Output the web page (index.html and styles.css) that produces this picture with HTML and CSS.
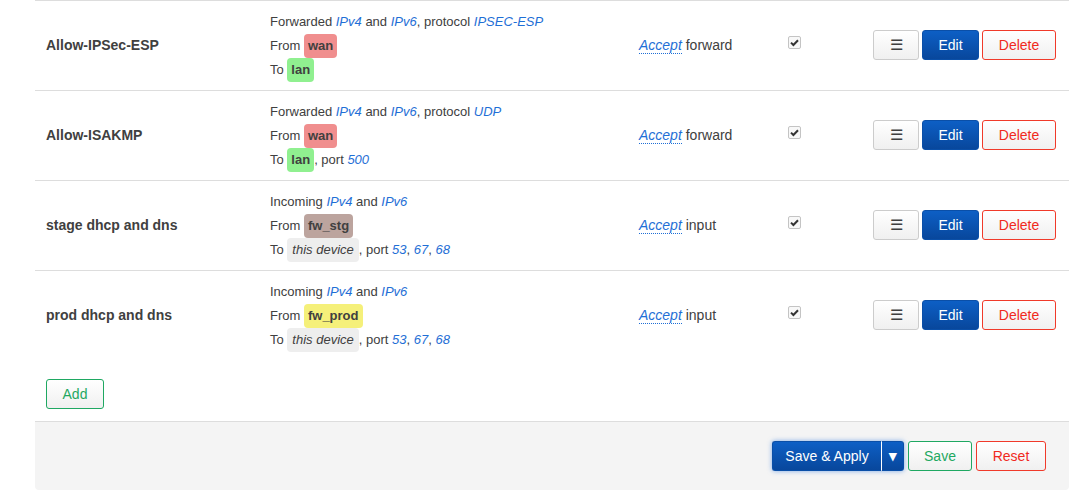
FILE: index.html
```html
<!DOCTYPE html>
<html>
<head>
<meta charset="utf-8">
<link rel="stylesheet" href="styles.css">
</head>
<body>
<div class="wrap">
  <div class="table">
    <div class="tr">
      <div class="td name">Allow-IPSec-ESP</div>
      <div class="td desc">
        <div class="line">Forwarded <em>IPv4</em> and <em>IPv6</em>, protocol <em>IPSEC-ESP</em></div>
        <div class="line">From <span class="zone z-wan">wan</span></div>
        <div class="line">To <span class="zone z-lan">lan</span></div>
      </div>
      <div class="td action"><span class="act">Accept</span> forward</div>
      <div class="td en"><span class="cb"><svg viewBox="0 0 13 13" width="13" height="13"><path d="M3 6.6 L5.4 9 L10 4.2" fill="none" stroke="#333" stroke-width="2"/></svg></span></div>
      <div class="td btns"><button class="btn menu">☰</button><button class="btn edit">Edit</button><button class="btn del">Delete</button></div>
    </div>
    <div class="tr">
      <div class="td name">Allow-ISAKMP</div>
      <div class="td desc">
        <div class="line">Forwarded <em>IPv4</em> and <em>IPv6</em>, protocol <em>UDP</em></div>
        <div class="line">From <span class="zone z-wan">wan</span></div>
        <div class="line">To <span class="zone z-lan">lan</span>, port <em>500</em></div>
      </div>
      <div class="td action"><span class="act">Accept</span> forward</div>
      <div class="td en"><span class="cb"><svg viewBox="0 0 13 13" width="13" height="13"><path d="M3 6.6 L5.4 9 L10 4.2" fill="none" stroke="#333" stroke-width="2"/></svg></span></div>
      <div class="td btns"><button class="btn menu">☰</button><button class="btn edit">Edit</button><button class="btn del">Delete</button></div>
    </div>
    <div class="tr">
      <div class="td name">stage dhcp and dns</div>
      <div class="td desc">
        <div class="line">Incoming <em>IPv4</em> and <em>IPv6</em></div>
        <div class="line">From <span class="zone z-stg">fw_stg</span></div>
        <div class="line">To <span class="zone z-dev">this device</span>, port <em>53</em>, <em>67</em>, <em>68</em></div>
      </div>
      <div class="td action"><span class="act">Accept</span> input</div>
      <div class="td en"><span class="cb"><svg viewBox="0 0 13 13" width="13" height="13"><path d="M3 6.6 L5.4 9 L10 4.2" fill="none" stroke="#333" stroke-width="2"/></svg></span></div>
      <div class="td btns"><button class="btn menu">☰</button><button class="btn edit">Edit</button><button class="btn del">Delete</button></div>
    </div>
    <div class="tr">
      <div class="td name">prod dhcp and dns</div>
      <div class="td desc">
        <div class="line">Incoming <em>IPv4</em> and <em>IPv6</em></div>
        <div class="line">From <span class="zone z-prod">fw_prod</span></div>
        <div class="line">To <span class="zone z-dev">this device</span>, port <em>53</em>, <em>67</em>, <em>68</em></div>
      </div>
      <div class="td action"><span class="act">Accept</span> input</div>
      <div class="td en"><span class="cb"><svg viewBox="0 0 13 13" width="13" height="13"><path d="M3 6.6 L5.4 9 L10 4.2" fill="none" stroke="#333" stroke-width="2"/></svg></span></div>
      <div class="td btns"><button class="btn menu">☰</button><button class="btn edit">Edit</button><button class="btn del">Delete</button></div>
    </div>
  </div>
  <div class="add-row"><button class="btn add">Add</button></div>
  <div class="footer">
    <div class="apply-group"><button class="apply-main">Save &amp; Apply</button><button class="apply-drop">▾</button></div>
    <button class="btn save">Save</button>
    <button class="btn reset">Reset</button>
  </div>
</div>
</body>
</html>
```

FILE: styles.css
```css
* { box-sizing: border-box; }
body {
  margin: 0;
  background: #fff;
  font-family: "Liberation Sans", Arial, sans-serif;
  color: #404040;
  font-size: 13px;
}
.wrap {
  margin-left: 35px;
  width: 1034px;
}
.tr {
  display: grid;
  grid-template-columns: 224px 369px 149px 80px 1fr;
  height: 90px;
  border-top: 1px solid #ddd;
  padding-bottom: 2px;
  align-items: center;
}
.td { padding: 0 11px; }
.name {
  font-weight: bold;
  font-size: 14px;
  color: #404040;
}
.desc .line {
  height: 24px;
  line-height: 24px;
  white-space: nowrap;
}
.desc { margin-top: 3px; }
em {
  color: #1f6fd6;
  font-style: italic;
}
.zone {
  display: inline-block;
  line-height: 24px;
  height: 24px;
  padding: 0 4px;
  border-radius: 4px;
  font-weight: bold;
  color: #404040;
  vertical-align: top;
}
.z-wan { background: #f08e8e; }
.z-lan { background: #90f090; }
.z-stg { background: #bca49e; }
.z-prod { background: #f5f07a; }
.z-dev {
  background: #eee;
  font-weight: normal;
  font-style: italic;
  padding: 0 5px;
}
.action { font-size: 14px; }
.act {
  color: #1f6fd6;
  font-style: italic;
  border-bottom: 1px dotted #1f6fd6;
}
.en { padding-left: 11px; margin-top: -4px; }
.cb {
  display: block;
  width: 13px;
  height: 13px;
  border: 1px solid #c4c4c4;
  border-radius: 2px;
  background: #f8f8f8;
}
.cb svg { display: block; margin: -1px 0 0 -1px; }
.btns {
  display: flex;
  justify-content: flex-end;
  gap: 3px;
  padding-right: 13px;
}
.btn {
  font-family: "Liberation Sans", Arial, sans-serif;
  font-size: 14px;
  height: 30px;
  padding: 0 15px;
  border-radius: 3px;
  border: 1px solid #ccc;
  background: linear-gradient(#fff, #f0f0f0);
  color: #404040;
  cursor: pointer;
}
.menu { width: 46px; padding: 0; font-size: 15px; }
.edit {
  width: 57px;
  padding: 0;
  background: linear-gradient(#0d5fc5, #08479c);
  border-color: #0a4fa8;
  color: #fff;
}
.del {
  width: 74px;
  padding: 0;
  border: 1.5px solid #f03a2a;
  color: #f02a1e;
}
.add-row {
  padding: 19px 11px 12px;
}
.add {
  width: 58px;
  padding: 0;
  border-color: #1fa862;
  color: #1fa862;
}
.footer {
  height: 69px;
  background: #f4f4f4;
  border-top: 1px solid #ddd;
  border-radius: 0 0 4px 4px;
  display: flex;
  align-items: center;
  justify-content: flex-end;
  gap: 4px;
  padding-right: 23px;
  padding-bottom: 1px;
}
.apply-group {
  display: flex;
  height: 30px;
  border-radius: 3px;
  box-shadow: 0 0 5px rgba(30, 110, 220, 0.55);
}
.apply-main, .apply-drop {
  font-family: "Liberation Sans", Arial, sans-serif;
  height: 30px;
  border: 1px solid #0a4fa8;
  background: linear-gradient(#0d5fc5, #08479c);
  color: #fff;
  font-size: 14px;
}
.apply-main {
  width: 109px;
  padding: 0;
  border-radius: 3px 0 0 3px;
  border-right: 0;
}
.apply-drop {
  width: 23px;
  padding: 0;
  border-left: 1px solid #fff;
  border-radius: 0 3px 3px 0;
  font-size: 15px;
  font-weight: bold;
}
.save {
  width: 64px;
  padding: 0;
  border-color: #1fa862;
  color: #1fa862;
}
.reset {
  width: 70px;
  padding: 0;
  border: 1.5px solid #f03a2a;
  color: #f02a1e;
}
```
